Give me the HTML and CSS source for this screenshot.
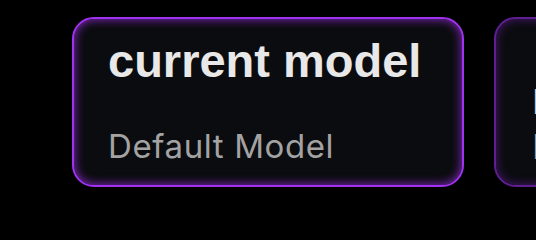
FILE: index.html
```html
<!DOCTYPE html>
<html lang="en">
  <head>
    <meta charset="UTF-8" />
    <meta name="viewport" content="width=device-width, initial-scale=1.0" />
    <title>Model</title>
    <link rel="stylesheet" href="styles.css">
  </head>
  <body>
    <div class="row">
      <div class="card">
        <div class="title">current model</div>
        <div class="sub">Default Model</div>
      </div>
      <div class="card dim">
        <div class="line strong">Provider</div>
        <div class="line">Base URL</div>
      </div>
    </div>
  </body>
</html>
```

FILE: styles.css
```css
* {
  box-sizing: border-box;
}

body {
  margin: 0;
  padding: 0;
  background: #000;
  overflow: hidden;
  width: 536px;
  height: 240px;
}

.row {
  display: flex;
  gap: 30px;
  padding: 17px 0 0 72px;
}

.card {
  flex: none;
  width: 392px;
  height: 170px;
  background: #0b0c0f;
  border: 2px solid #a232f2;
  border-radius: 22px;
  box-shadow: inset 0 0 10px 1px rgba(160, 45, 235, 0.75);
  padding: 15px 34px 0 34px;
  display: flex;
  flex-direction: column;
}

.title {
  font-family: "Liberation Sans", Arial, sans-serif;
  font-weight: bold;
  font-size: 47px;
  color: #e8e8e8;
  line-height: 54px;
}

.sub {
  font-family: Inter, "Noto Sans", sans-serif;
  font-size: 33px;
  letter-spacing: 0.6px;
  color: #a3a3a3;
  margin-top: 38px;
  line-height: 40px;
}

.card.dim {
  border-color: #5f1e92;
  box-shadow: inset 0 0 10px 1px rgba(110, 30, 170, 0.55);
  padding: 60px 36px 0 36px;
}

.line {
  font-family: Inter, "Noto Sans", sans-serif;
  font-size: 34px;
  line-height: 45px;
  color: #a0a0a0;
}

.line.strong {
  color: #cfcfcf;
}
```
